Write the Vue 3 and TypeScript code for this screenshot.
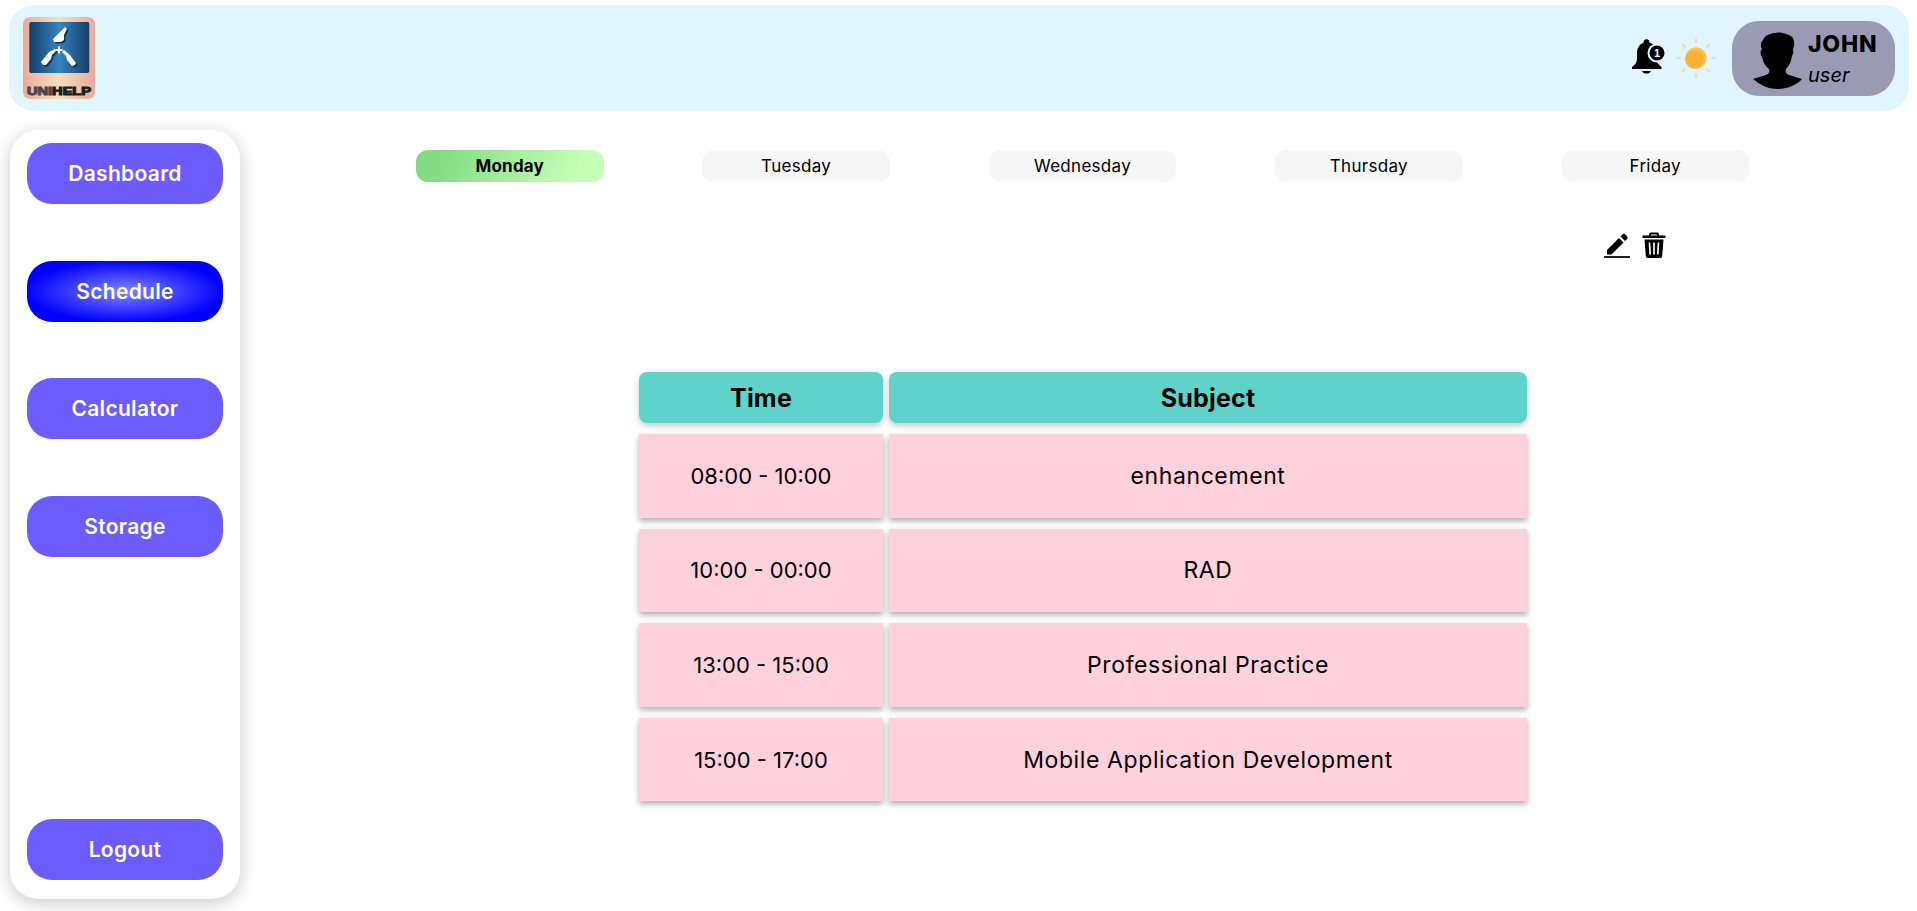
<script setup lang="ts">
const navItems = [
  { label: 'Dashboard', active: false },
  { label: 'Schedule', active: true },
  { label: 'Calculator', active: false },
  { label: 'Storage', active: false }
]

const days = ['Monday', 'Tuesday', 'Wednesday', 'Thursday', 'Friday']

const rows = [
  { time: '08:00 - 10:00', subject: 'enhancement' },
  { time: '10:00 - 00:00', subject: 'RAD' },
  { time: '13:00 - 15:00', subject: 'Professional Practice' },
  { time: '15:00 - 17:00', subject: 'Mobile Application Development' }
]

const rays = [0, 45, 90, 135, 180, 225, 270, 315]
</script>

<template>
  <div class="page">
    <header class="topbar">
      <svg class="logo" viewBox="0 0 72 82">
        <defs>
          <linearGradient id="logoFrame" x1="0" x2="1" y1="0" y2="0">
            <stop offset="0" stop-color="#eca99b" />
            <stop offset="0.5" stop-color="#f3e0bd" />
            <stop offset="1" stop-color="#eca99b" />
          </linearGradient>
          <linearGradient id="logoBlue" x1="0" x2="1" y1="0" y2="0">
            <stop offset="0" stop-color="#143f68" />
            <stop offset="0.5" stop-color="#3583bf" />
            <stop offset="1" stop-color="#143f68" />
          </linearGradient>
        </defs>
        <rect width="72" height="82" rx="7" fill="url(#logoFrame)" />
        <rect x="6.300" y="5" width="60" height="51" rx="2" fill="url(#logoBlue)" />
        <g fill="#0b1c30" opacity="0.75" transform="translate(1.500 1.500)">
          <path d="M42 10l2 2-3 6 0 5-3 2-7 0-1-3 5-5z" />
          <path d="M18 45l8-10 6-3 1 2-4 4-1 4-5 6-3 0z" />
          <path d="M53 46l-6-8-6-5-2 2 4 4 1 4 5 6 3-1z" />
        </g>
        <g fill="#fff">
          <path d="M42 10l2 2-3 6 0 5-3 2-7 0-1-3 5-5z" />
          <path d="M18 45l8-10 6-3 1 2-4 4-1 4-5 6-3 0z" />
          <path d="M53 46l-6-8-6-5-2 2 4 4 1 4 5 6 3-1z" />
          <path d="M35 29.500h2v2.500h2.500v2H37v2.500h-2V34h-2.500v-2H35z" />
        </g>
        <text x="36" y="78" class="logo-text" text-anchor="middle" textLength="64" lengthAdjust="spacingAndGlyphs"><tspan class="logo-uni">UNI</tspan>HELP</text>
      </svg>

      <div class="top-actions">
        <svg class="bell" viewBox="0 0 36 38">
          <circle cx="15.500" cy="5" r="2.800" fill="#000" />
          <path d="M15.500 5c6 0 10 5 10 11v6c0 3 2 6 5 8v2H1v-2c3-2 5-5 5-8v-6c0-6 4-11 9.500-11z" fill="#000" />
          <path d="M11 34h9c-1 2-2.500 2.500-4.500 2.500S12 36 11 34z" fill="#000" />
          <circle cx="26" cy="16" r="9.500" fill="#dff6ff" />
          <circle cx="26" cy="16" r="7.500" fill="#000" />
          <text x="26" y="20" class="bell-num" text-anchor="middle">1</text>
        </svg>
        <svg class="sun" viewBox="0 0 40 40">
          <g v-for="r in rays" :key="r" :transform="`rotate(${r} 20 20)`">
            <line x1="20" y1="0.500" x2="20" y2="5" stroke="#fcd581" stroke-width="1.500" />
          </g>
          <circle cx="20" cy="20" r="10.700" fill="#ffc04d" />
          <circle cx="18.500" cy="21.500" r="9.300" fill="#fdb137" />
        </svg>
        <div class="user">
          <svg class="avatar" viewBox="0 0 50 57">
            <path d="M10 8C12 3 18 1 23 1C26 0 30 1 33 2C37 3 41 5 41 10C42 14 40 15 40 18C41 20 40 22 39 24C38 29 37 33 33 37C32 40 33 42 36 43L49 47C44 53 34 57 25 57C14 57 6 52 0 47L13 43C16 42 17 40 16 37C12 34 10 30 9 25C7 22 7 19 9 17C7 14 8 10 10 8Z" fill="#000" />
          </svg>
          <div class="user-text">
            <span class="user-name">JOHN</span>
            <span class="user-role">user</span>
          </div>
        </div>
      </div>
    </header>

    <div class="body">
      <aside class="sidebar">
        <nav class="nav">
          <button v-for="item in navItems" :key="item.label" class="nav-btn" :class="{ active: item.active }">
            {{ item.label }}
          </button>
        </nav>
        <button class="nav-btn">Logout</button>
      </aside>

      <main class="content">
        <div class="days">
          <button v-for="(day, i) in days" :key="day" class="day" :class="{ selected: i === 0 }">{{ day }}</button>
        </div>

        <div class="actions">
          <svg class="act-icon" viewBox="0 0 26 26">
            <path d="M3 18L15 6l4.500 4.500L7.500 22.500H3z" fill="#000" />
            <path d="M16.500 4.500l2-2a2 2 0 0 1 2.800 0l1.700 1.700a2 2 0 0 1 0 2.800l-2 2z" fill="#000" />
            <rect x="0" y="24" width="26" height="2" fill="#222" />
          </svg>
          <svg class="act-icon trash" viewBox="0 0 24 26">
            <path d="M7 3.500V2.500A2 2 0 0 1 9 .5h6a2 2 0 0 1 2 2v1h6.500V6H.5V3.500zM8.800 3.500h6.400v-1H8.800z" fill="#000" fill-rule="evenodd" />
            <path d="M2.500 7.500h19l-1.300 16.500a2 2 0 0 1-2 2H5.800a2 2 0 0 1-2-2z" fill="#000" />
            <path d="M7.500 10.500l.7 12M12 10.500v12M16.500 10.500l-.7 12" stroke="#fff" stroke-width="1.700" />
          </svg>
        </div>

        <table class="schedule">
          <thead>
            <tr>
              <th class="col-time">Time</th>
              <th>Subject</th>
            </tr>
          </thead>
          <tbody>
            <tr v-for="row in rows" :key="row.time">
              <td class="cell-time">{{ row.time }}</td>
              <td>{{ row.subject }}</td>
            </tr>
          </tbody>
        </table>
      </main>
    </div>
  </div>
</template>

<style>
html,
body {
  margin: 0;
  background: #fff;
}
</style>

<style scoped>
.page {
  width: 1917px;
  height: 911px;
  overflow: hidden;
  font-family: Inter, "Open Sans", sans-serif;
  color: #000;
  box-sizing: border-box;
  padding-top: 5px;
}

.topbar {
  height: 106px;
  margin: 0 8px 0 9px;
  padding: 12px 14px 12px 14px;
  box-sizing: border-box;
  background: #dff6ff;
  border-radius: 25px;
  display: flex;
  align-items: center;
  justify-content: space-between;
}

.logo {
  width: 72px;
  height: 82px;
  display: block;
}

.logo-text {
  font-family: "Liberation Sans", sans-serif;
  font-weight: 700;
  font-size: 10.500px;
  fill: #1f1f23;
  stroke: #1f1f23;
  stroke-width: 1.100px;
}

.logo-uni {
  fill: #4a4a4e;
  stroke: #4a4a4e;
}

.top-actions {
  display: flex;
  align-items: center;
}

.bell {
  width: 36px;
  height: 38px;
  margin-right: 9px;
  margin-bottom: 5px;
  margin-top: 0;
}

.bell-num {
  font-family: "Liberation Sans", sans-serif;
  font-size: 11px;
  font-weight: 700;
  fill: #fff;
}

.sun {
  width: 40px;
  height: 40px;
  margin-right: 16px;
}

.user {
  width: 163px;
  height: 75px;
  background: #9a9ab5;
  border-radius: 27px;
  display: flex;
  align-items: center;
  padding-left: 21px;
  box-sizing: border-box;
}

.avatar {
  width: 50px;
  height: 57px;
  margin-right: 5px;
  margin-top: 4px;
}

.user-text {
  display: flex;
  flex-direction: column;
  gap: 7px;
}

.user-name {
  font-size: 23px;
  font-weight: 800;
  line-height: 26px;
  letter-spacing: 0.8px;
}

.user-role {
  font-size: 20px;
  font-style: italic;
  font-weight: 400;
  line-height: 22px;
}

.body {
  display: flex;
}

.sidebar {
  width: 230px;
  height: 769px;
  margin: 19px 0 0 10px;
  padding: 13px 17px 19px;
  box-sizing: border-box;
  background: #fff;
  border-radius: 28px;
  box-shadow: 0 4px 18px rgba(0, 0, 0, 0.22);
  display: flex;
  flex-direction: column;
  justify-content: space-between;
  flex-shrink: 0;
}

.nav {
  display: flex;
  flex-direction: column;
  gap: 56.700px;
}

.nav-btn {
  width: 196px;
  height: 61px;
  border: 0;
  border-radius: 25px;
  background: #6c5bff;
  color: #fff;
  font-family: inherit;
  font-size: 21px;
  font-weight: 600;
  letter-spacing: 0.3px;
  padding: 0;
}

.nav-btn.active {
  background: radial-gradient(ellipse at center, #7f86ff 0%, #3a3cff 40%, #0000ff 72%);
}

.content {
  flex: 1;
  min-width: 0;
}

.days {
  display: flex;
  justify-content: space-between;
  width: 1333px;
  margin: 39px 0 0 176px;
}

.day {
  width: 187.500px;
  height: 32px;
  border: 0;
  border-radius: 12px;
  background: #f6f6f6;
  color: #000;
  font-family: inherit;
  font-size: 17px;
  font-weight: 400;
  letter-spacing: 0.3px;
  padding: 0;
}

.day.selected {
  background: linear-gradient(110deg, #85dc85 15%, #c6ffb6 85%);
  font-weight: 700;
  letter-spacing: 0.2px;
}

.actions {
  display: flex;
  align-items: flex-end;
  gap: 12px;
  margin: 50px 0 0 1364px;
}

.act-icon {
  width: 26px;
  height: 26px;
}

.act-icon.trash {
  width: 24px;
}

.schedule {
  margin: 103px 0 0 393px;
  border-collapse: separate;
  border-spacing: 6px 11px;
  width: 900px;
  table-layout: fixed;
}

.schedule th {
  height: 51px;
  padding: 0;
  background: #5fd3c9;
  border-radius: 8px;
  font-size: 25px;
  font-weight: 700;
  letter-spacing: 0.2px;
  box-shadow: 0 3px 6px rgba(0, 0, 0, 0.22);
}

.schedule .col-time {
  width: 244px;
}

.schedule td {
  height: 83.600px;
  padding: 0;
  background: #ffd1dc;
  text-align: center;
  font-size: 23px;
  font-weight: 400;
  letter-spacing: 0.6px;
  box-shadow: 0 3px 6px rgba(0, 0, 0, 0.32);
}

.schedule .cell-time {
  font-size: 22px;
  letter-spacing: 0;
}
</style>
